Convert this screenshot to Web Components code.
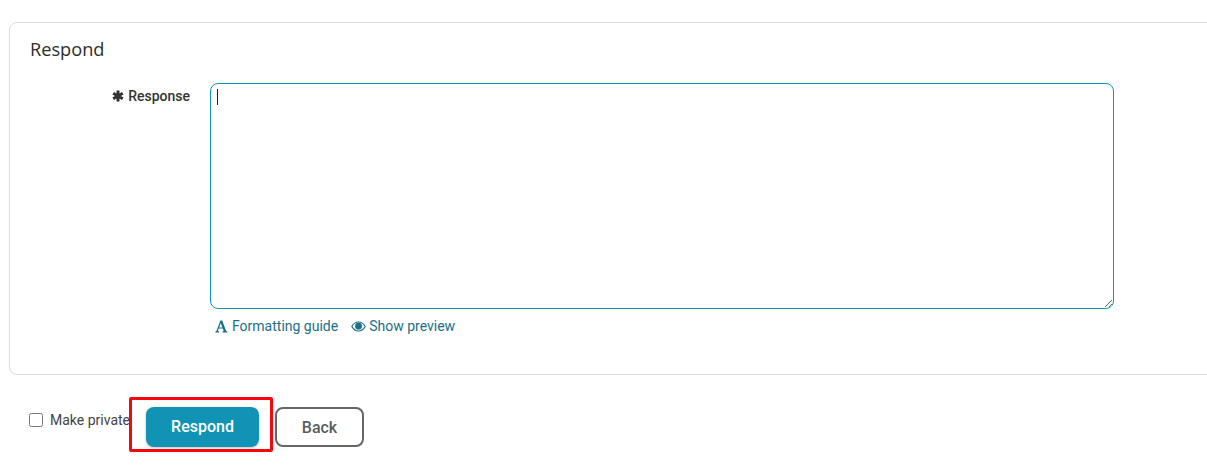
<!DOCTYPE html>
<html>
<head>
<meta charset="utf-8">
<title>Respond</title>
<style>
  html, body { margin: 0; padding: 0; background: #fff; overflow: hidden; }
  body { font-family: Roboto, "Liberation Sans", sans-serif; color: #333; }
</style>
</head>
<body>
<respond-page>
  <respond-card heading="Respond">
    <response-field label="Response"></response-field>
  </respond-card>
  <form-actions></form-actions>
</respond-page>

<script>
// respond-page.js

class RespondPage extends HTMLElement {
  constructor(){
    super();
    this.attachShadow({mode: "open"}).innerHTML = `
      <style>
        :host {
          display: block;
          height: 465px;
          overflow: hidden;
          padding: 22px 0 0 9px;
          box-sizing: border-box;
        }
      </style>
      <slot></slot>
    `;
  }
}

class RespondCard extends HTMLElement {
  constructor(){
    super();
    this.attachShadow({mode: "open"}).innerHTML = `
      <style>
        :host {
          display: block;
          box-sizing: border-box;
          width: 1220px;
          height: 353px;
          border: 1px solid #ddd;
          border-radius: 8px;
          padding: 14px 20px 0 20px;
        }
        h2 {
          margin: 0 0 22px 0;
          font: 400 18.2px/24px "Open Sans", sans-serif;
          color: #2d2d2d;
        }
      </style>
      <h2></h2>
      <slot></slot>
    `;
  }
  connectedCallback(){
    this.shadowRoot.querySelector("h2").textContent = this.getAttribute("heading");
  }
}

class ResponseField extends HTMLElement {
  constructor(){
    super();
    this.attachShadow({mode: "open"}).innerHTML = `
      <style>
        :host {
          display: grid;
          grid-template-columns: 160px 904px;
          column-gap: 20px;
          font: 14px/20px Roboto, sans-serif;
        }
        .label {
          display: flex;
          justify-content: flex-end;
          align-items: center;
          gap: 4px;
          height: 20px;
          margin-top: 3px;
          font-weight: 500;
          color: #333;
        }
        .label svg { width: 12px; height: 12px; stroke: #333; stroke-width: 3; }
        .box { position: relative; height: 226px; }
        textarea {
          display: block;
          box-sizing: border-box;
          width: 904px;
          height: 226px;
          margin: 0;
          padding: 6px;
          border: 1px solid #1193b5;
          border-radius: 8px;
          outline: none;
          resize: both;
          background: #fff;
        }
        .caret {
          position: absolute;
          left: 7px;
          top: 6px;
          width: 1px;
          height: 16px;
          background: #222;
        }
        .links {
          display: flex;
          gap: 13px;
          padding: 7px 0 0 5px;
          color: #1a6f86;
        }
        .links span { display: flex; align-items: center; gap: 4px; }
        .links span + span { gap: 3px; }
        .links svg { fill: #1a6f86; display: block; }
      </style>
      <div class="label">
        <svg viewBox="0 0 12 12"><path d="M6 0.5v11M1.2 3.2l9.6 5.6M10.8 3.2l-9.6 5.6"/></svg>
        <span></span>
      </div>
      <div>
        <div class="box">
          <textarea></textarea>
          <div class="caret"></div>
        </div>
        <div class="links">
          <span>
            <svg width="13" height="13" viewBox="0 0 13 13"><path d="M5.4 0.5h1.8l3.9 10.6 1.3.3v1H7.5v-1l1.2-.3-.9-2.6H3.7l-.9 2.6 1.3.3v1H0.4v-1l1-.3zM5.8 3L4.2 7.4h3.1z"/></svg>
            Formatting guide
          </span>
          <span>
            <svg width="15" height="11" viewBox="0 0 15 11"><path fill-rule="evenodd" d="M7.5 0.5C4.3 0.5 1.6 2.5 0.2 5.5c1.4 3 4.1 5 7.3 5s5.9-2 7.3-5c-1.4-3-4.1-5-7.3-5zM7.5 1.6c2.5 0 4.8 1.5 6 3.9-1.2 2.4-3.5 3.9-6 3.9s-4.8-1.5-6-3.9c1.2-2.4 3.5-3.9 6-3.9z"/><circle cx="7.5" cy="5.2" r="3.4"/></svg>
            Show preview
          </span>
        </div>
      </div>
    `;
  }
  connectedCallback(){
    this.shadowRoot.querySelector(".label span").textContent = this.getAttribute("label");
  }
}

class FormActions extends HTMLElement {
  constructor(){
    super();
    this.attachShadow({mode: "open"}).innerHTML = `
      <style>
        :host {
          display: flex;
          align-items: flex-start;
          padding: 32px 0 0 20px;
          font: 14px/20px Roboto, sans-serif;
        }
        label {
          display: flex;
          align-items: center;
          gap: 7px;
          width: 117px;
          height: 20px;
          margin-top: 3px;
          color: #444;
          white-space: nowrap;
        }
        input {
          width: 14px;
          height: 14px;
          margin: 0;
        }
        button {
          box-sizing: border-box;
          height: 40px;
          border-radius: 8px;
          font: 500 16px/20px Roboto, sans-serif;
          cursor: pointer;
        }
        .primary {
          width: 113px;
          background: #1193b5;
          border: none;
          color: #fff;
          box-shadow: 0 1px 3px rgba(0,0,0,0.25);
        }
        .secondary {
          width: 89px;
          margin-left: 16px;
          padding-top: 2px;
          background: #fff;
          border: 2px solid #666;
          color: #5c5c5c;
        }
        .wrap { position: relative; }
        .mark {
          position: absolute;
          left: -17px;
          top: -10px;
          width: 144px;
          height: 55px;
          box-sizing: border-box;
          border: 3px solid #f7060f;
          border-radius: 2px;
          pointer-events: none;
        }
      </style>
      <label><input type="checkbox"><span>Make private</span></label>
      <div class="wrap">
        <button class="primary">Respond</button>
        <div class="mark"></div>
      </div>
      <button class="secondary">Back</button>
    `;
  }
}

customElements.define('respond-page', RespondPage);
customElements.define('respond-card', RespondCard);
customElements.define('response-field', ResponseField);
customElements.define('form-actions', FormActions);
</script>
</body>
</html>
